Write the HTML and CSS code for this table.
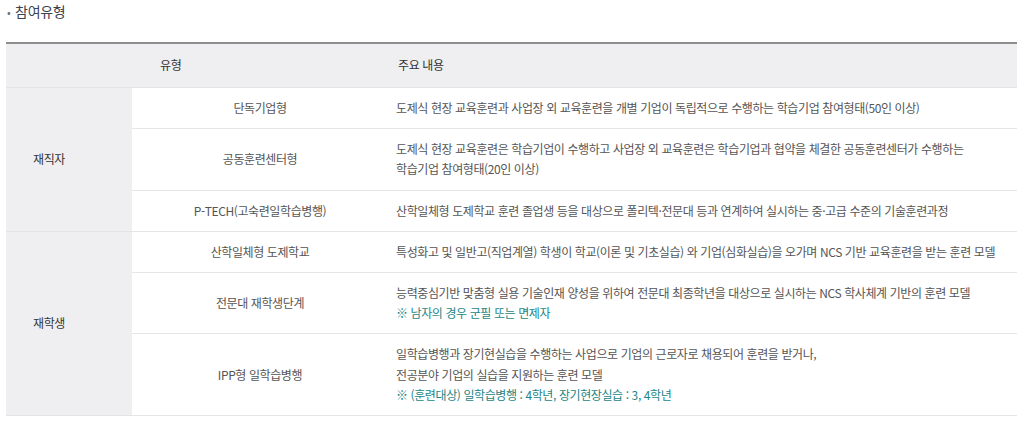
FILE: index.html
```html
<!DOCTYPE html>
<html lang="ko">
<head>
<meta charset="utf-8">
<link rel="stylesheet" href="styles.css">
</head>
<body>
<h3 class="title"><span class="dot">•</span> 참여유형</h3>
<table class="tbl">
  <colgroup>
    <col class="c1"><col class="c2"><col class="c3">
  </colgroup>
  <thead>
    <tr>
      <th colspan="2" class="h-type">유형</th>
      <th class="h-desc">주요 내용</th>
    </tr>
  </thead>
  <tbody>
    <tr>
      <th rowspan="3" class="grp">재직자</th>
      <td class="type">단독기업형</td>
      <td class="desc">도제식 현장 교육훈련과 사업장 외 교육훈련을 개별 기업이 독립적으로 수행하는 학습기업 참여형태(50인 이상)</td>
    </tr>
    <tr>
      <td class="type">공동훈련센터형</td>
      <td class="desc">도제식 현장 교육훈련은 학습기업이 수행하고 사업장 외 교육훈련은 학습기업과 협약을 체결한 공동훈련센터가 수행하는<br>학습기업 참여형태(20인 이상)</td>
    </tr>
    <tr class="grp-end">
      <td class="type">P-TECH(고숙련일학습병행)</td>
      <td class="desc">산학일체형 도제학교 훈련 졸업생 등을 대상으로 폴리텍·전문대 등과 연계하여 실시하는 중·고급 수준의 기술훈련과정</td>
    </tr>
    <tr>
      <th rowspan="3" class="grp">재학생</th>
      <td class="type">산학일체형 도제학교</td>
      <td class="desc">특성화고 및 일반고(직업계열) 학생이 학교(이론 및 기초실습) 와 기업(심화실습)을 오가며 NCS 기반 교육훈련을 받는 훈련 모델</td>
    </tr>
    <tr>
      <td class="type">전문대 재학생단계</td>
      <td class="desc">능력중심기반 맞춤형 실용 기술인재 양성을 위하여 전문대 최종학년을 대상으로 실시하는 NCS 학사체계 기반의 훈련 모델<br><span class="note">※ 남자의 경우 군필 또는 면제자</span></td>
    </tr>
    <tr>
      <td class="type">IPP형 일학습병행</td>
      <td class="desc">일학습병행과 장기현실습을 수행하는 사업으로 기업의 근로자로 채용되어 훈련을 받거나,<br>전공분야 기업의 실습을 지원하는 훈련 모델<br><span class="note">※ (훈련대상) 일학습병행 : 4학년, 장기현장실습 : 3, 4학년</span></td>
    </tr>
  </tbody>
</table>
</body>
</html>
```

FILE: styles.css
```css
html, body {
  margin: 0;
  padding: 0;
  background: #fff;
}
body {
  padding: 0 7px 0 6px;
  font-family: "Noto Sans CJK KR", "Noto Sans", sans-serif;
  color: #555;
}
.title {
  margin: 0;
  padding-top: 1px;
  height: 41px;
  font-size: 14px;
  line-height: 20px;
  font-weight: 400;
  color: #3b4452;
  letter-spacing: -0.3px;
}
.title .dot {
  font-size: 11px;
  color: #6b7280;
  margin-left: 1px;
  margin-right: 1px;
}
.tbl {
  width: 100%;
  border-collapse: collapse;
  border-top: 2px solid #8e8e8e;
  font-size: 12px;
  line-height: 20.2px;
  letter-spacing: -0.4px;
}
.c1 { width: 126px; }
.c2 { width: 256px; }
thead th {
  background: #efeff1;
  color: #333;
  font-weight: 400;
  height: 43px;
  padding: 0;
  border-bottom: 1px solid #e3e3e5;
  text-align: left;
}
.h-type { padding-left: 154px; }
.h-desc { padding-left: 10px; }
.grp {
  background: #efeff1;
  color: #333;
  font-weight: 400;
  text-align: left;
  padding: 0 0 0 27px;
  border-bottom: 1px solid #e3e3e5;
}
td {
  padding: 10px 8px 10px 8px;
  border-bottom: 1px solid #e6e6e6;
  vertical-align: middle;
}
.type {
  text-align: center;
  color: #555;
}
.desc {
  color: #555;
}
.note {
  color: #1d8585;
}
```
